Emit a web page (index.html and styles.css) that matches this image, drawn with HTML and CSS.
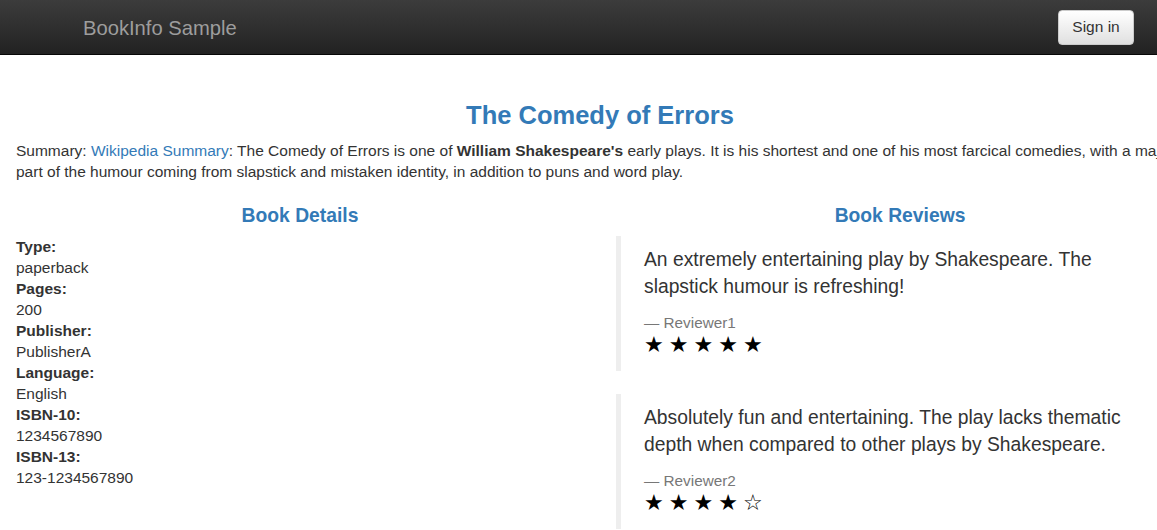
FILE: index.html
```html
<!DOCTYPE html>
<html>
<head>
<meta charset="utf-8">
<title>BookInfo Sample</title>
<link rel="stylesheet" href="styles.css">
</head>
<body>
<nav class="navbar">
  <span class="brand">BookInfo Sample</span>
  <button class="btn-signin">Sign in</button>
</nav>
<div class="page">
  <h3 class="title">The Comedy of Errors</h3>
  <p class="summary">Summary: <a href="#">Wikipedia Summary</a>: The Comedy of Errors is one of <b>William Shakespeare's</b> early plays. It is his shortest and one of his most farcical comedies, with a major part of the humour coming from slapstick and mistaken identity, in addition to puns and word play.</p>
  <div class="row">
    <div class="col">
      <h4 class="col-title">Book Details</h4>
      <dl class="details">
        <dt>Type:</dt><dd>paperback</dd>
        <dt>Pages:</dt><dd>200</dd>
        <dt>Publisher:</dt><dd>PublisherA</dd>
        <dt>Language:</dt><dd>English</dd>
        <dt>ISBN-10:</dt><dd>1234567890</dd>
        <dt>ISBN-13:</dt><dd>123-1234567890</dd>
      </dl>
    </div>
    <div class="col">
      <h4 class="col-title">Book Reviews</h4>
      <blockquote class="review">
        <p>An extremely entertaining play by Shakespeare. The slapstick humour is refreshing!</p>
        <small class="reviewer">— Reviewer1</small>
        <div class="stars">★★★★★</div>
      </blockquote>
      <blockquote class="review">
        <p>Absolutely fun and entertaining. The play lacks thematic depth when compared to other plays by Shakespeare.</p>
        <small class="reviewer">— Reviewer2</small>
        <div class="stars">★★★★☆</div>
      </blockquote>
    </div>
  </div>
</div>
</body>
</html>
```
FILE: styles.css
```css
html, body {
  margin: 0;
  padding: 0;
  overflow: hidden;
}
body {
  font-family: "Liberation Sans", Arial, sans-serif;
  font-size: 15.5px;
  line-height: 21px;
  color: #333;
  background: #fff;
  width: 1200px;
}
.navbar {
  height: 55px;
  box-sizing: border-box;
  background: linear-gradient(to bottom, #3c3c3c 0%, #222 100%);
  border-bottom: 1px solid #080808;
  display: flex;
  align-items: center;
  justify-content: space-between;
  padding: 0 23px 0 83px;
  width: 1157px;
}
.brand {
  color: #9d9d9d;
  font-size: 20.2px;
  line-height: 22px;
  padding-top: 2px;
}
.btn-signin {
  font-family: "Liberation Sans", Arial, sans-serif;
  font-size: 15.5px;
  line-height: 20px;
  height: 35px;
  width: 76px;
  padding: 0;
  color: #333;
  background: linear-gradient(to bottom, #fff 0%, #e0e0e0 100%);
  border: 1px solid #ccc;
  border-radius: 4px;
}
.page {
  padding: 0 16px;
}
.title {
  margin: 45px 0 10px;
  text-align: center;
  color: #337ab7;
  font-size: 25.5px;
  line-height: 30px;
  font-weight: bold;
}
.summary {
  margin: 0 0 10px;
  width: 1168px;
}
.summary a {
  color: #337ab7;
  text-decoration: none;
}
.row {
  display: flex;
  margin: 0 -16px;
}
.col {
  flex: 0 0 600px;
  box-sizing: border-box;
  padding: 0 16px;
}
.col-title {
  text-align: center;
  color: #337ab7;
  font-size: 19.3px;
  line-height: 21px;
  font-weight: bold;
  margin: 13px 0 10px;
}
.details {
  margin: 0;
}
.details dt {
  font-weight: bold;
}
.details dd {
  margin: 0;
}
.review {
  margin: 0 0 23px;
  padding: 10px 23px 14px;
  border-left: 5px solid #eee;
}
.review p {
  margin: 0 0 12px;
  font-size: 19.3px;
  line-height: 27px;
}
.reviewer {
  display: block;
  font-size: 15.3px;
  line-height: 21px;
  color: #777;
}
.stars {
  font-family: "DejaVu Sans", sans-serif;
  font-size: 22px;
  line-height: 24px;
  letter-spacing: 5px;
  color: #000;
}
```
